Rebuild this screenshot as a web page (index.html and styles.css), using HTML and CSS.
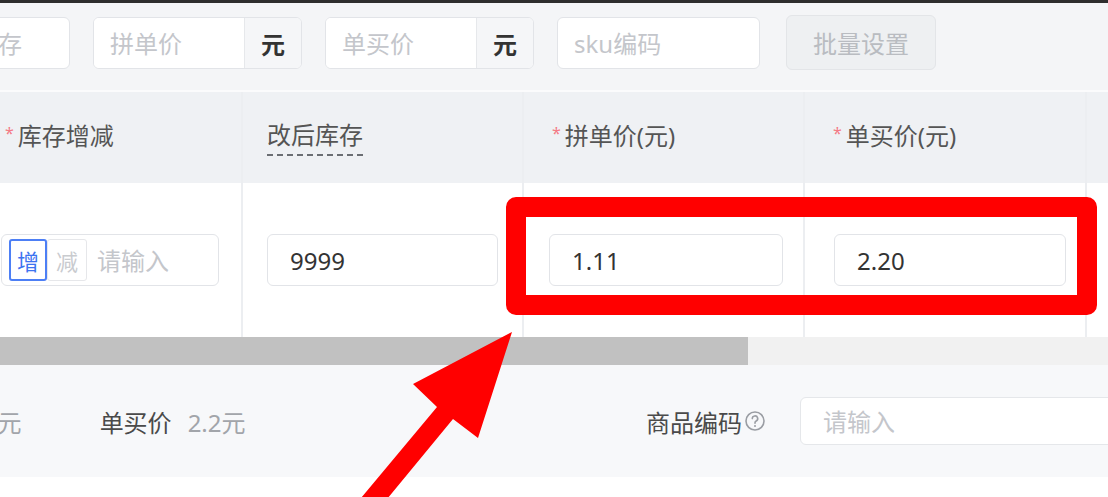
FILE: index.html
```html
<!DOCTYPE html>
<html lang="zh-CN">
<head>
<meta charset="utf-8">
<title>SKU 批量设置</title>
<link rel="stylesheet" href="styles.css">
</head>
<body>
<div class="page">
  <div class="topbar"></div>
  <div class="toolbar">
    <input class="input stock" placeholder="库存">
    <div class="group">
      <input class="input" placeholder="拼单价">
      <div class="addon">元</div>
    </div>
    <div class="group">
      <input class="input" placeholder="单买价">
      <div class="addon">元</div>
    </div>
    <input class="input sku" placeholder="sku编码">
    <button class="btn" disabled>批量设置</button>
  </div>

  <div class="table">
    <div class="row head">
      <div class="cell c1 req-cell"><span class="req">*</span>库存增减</div>
      <div class="cell c2"><span class="tip">改后库存</span></div>
      <div class="cell c3 req-cell"><span class="req">*</span>拼单价(元)</div>
      <div class="cell c4 req-cell"><span class="req">*</span>单买价(元)</div>
      <div class="cell c5"></div>
    </div>
    <div class="row body">
      <div class="cell c1">
        <div class="stepper">
          <span class="seg on">增</span>
          <span class="seg">减</span>
          <input class="step-input" placeholder="请输入">
        </div>
      </div>
      <div class="cell c2"><input class="input cell-input" value="9999"></div>
      <div class="cell c3 pad3"><input class="input cell-input" value="1.11"></div>
      <div class="cell c4 pad4"><input class="input cell-input" value="2.20"></div>
      <div class="cell c5"></div>
    </div>
  </div>

  <div class="scroll"><div class="thumb"></div></div>

  <div class="footer">
    <div class="fgroup first">
      <span class="flabel">拼单价</span><span class="fval">1.11元</span>
    </div>
    <div class="fgroup second">
      <span class="flabel">单买价</span><span class="fval">2.2元</span>
    </div>
    <div class="fright">
      <span class="flabel">商品编码</span>
      <svg class="qicon" viewBox="0 0 22 22" width="22" height="22" aria-hidden="true">
        <circle cx="11" cy="11" r="9" fill="none" stroke="#9a9da3" stroke-width="1.6"/>
        <path d="M8.3 8.6a2.7 2.7 0 1 1 3.9 2.4c-.8.4-1.2.9-1.2 1.7v.6" fill="none" stroke="#9a9da3" stroke-width="1.6" stroke-linecap="round"/>
        <circle cx="11" cy="15.9" r="1" fill="#9a9da3"/>
      </svg>
      <input class="input code" placeholder="请输入">
    </div>
  </div>
</div>

<div class="mark"></div>
<svg class="arrow" viewBox="0 0 1108 497" width="1108" height="497" aria-hidden="true">
  <polygon points="512,332 413,384 437,407 351,510 378,510 453,419 478,438" fill="#ff0000"/>
</svg>
</body>
</html>
```

FILE: styles.css
```css
html, body {
  margin: 0;
  padding: 0;
  overflow: hidden;
}

body {
  width: 1108px;
  height: 497px;
  background: #ffffff;
  font-family: "Noto Sans", "Noto Sans CJK SC", sans-serif;
  font-size: 24px;
  color: #333333;
  position: relative;
}

.page {
  width: 1108px;
  height: 497px;
  overflow: hidden;
}

.topbar {
  height: 3px;
  background: #2e2e2e;
}

/* toolbar */
.toolbar {
  height: 73px;
  padding-top: 14px;
  background: #f4f5f7;
  border-bottom: 2px solid #fbfbfc;
  display: flex;
  align-items: flex-start;
  gap: 23px;
}

.input {
  height: 52px;
  box-sizing: border-box;
  border: 1px solid #e2e4e8;
  border-radius: 6px;
  background: #ffffff;
  padding: 0 16px;
  font: inherit;
  color: #333333;
  outline: none;
  margin: 0;
}

.input::placeholder,
.step-input::placeholder {
  color: #c4c6cb;
}

.stock {
  width: 113px;
  margin-left: -43px;
  flex: 0 0 auto;
}

.group {
  display: flex;
  flex: 0 0 auto;
  width: 209px;
  height: 52px;
  box-sizing: border-box;
  border: 1px solid #e2e4e8;
  border-radius: 6px;
  overflow: hidden;
  background: #ffffff;
}

.group .input {
  border: none;
  border-radius: 0;
  flex: 1;
  min-width: 0;
  width: auto;
  height: 50px;
}

.addon {
  width: 56px;
  flex: 0 0 auto;
  border-left: 1px solid #e6e8eb;
  background: #f5f6f8;
  display: flex;
  align-items: center;
  justify-content: center;
  color: #333333;
  font-weight: 700;
}

.sku {
  width: 203px;
  flex: 0 0 auto;
}

.btn {
  flex: 0 0 auto;
  width: 150px;
  height: 55px;
  margin-top: -2px;
  margin-left: 3px;
  box-sizing: border-box;
  border: 1px solid #e3e5e8;
  border-radius: 6px;
  background: #eef0f2;
  color: #b9bcc1;
  font: inherit;
  padding: 0;
}

/* table */
.row {
  display: flex;
  margin-left: -23px;
}

.head {
  height: 91px;
  background: #eff1f4;
  color: #555555;
}

.head .cell {
  padding-bottom: 6px;
}

.body {
  height: 154px;
  background: #ffffff;
}

.cell {
  flex: 0 0 auto;
  box-sizing: border-box;
  border-right: 2px solid #eceef1;
  display: flex;
  align-items: center;
  padding: 0 24px;
}

.c1 { width: 266px; }
.c2 { width: 281px; }
.c3 { width: 281px; }
.c4 { width: 282px; }
.c5 { width: 220px; border-right: none; }

.head .req-cell {
  padding-left: 28px;
}

.req {
  color: #f47a86;
  font-size: 16px;
  margin-right: 4px;
  position: relative;
  top: -2px;
}

.tip {
  border-bottom: 2px dashed #6b6e73;
  line-height: 30px;
  padding-bottom: 4px;
  margin-top: 6px;
}

.pad3 { padding: 0 20px 0 25px; }
.pad4 { padding: 0 19px 0 29px; }

.cell-input {
  width: 100%;
  padding-left: 22px;
}

.stepper {
  width: 218px;
  height: 52px;
  box-sizing: border-box;
  border: 1px solid #e2e4e8;
  border-radius: 6px;
  display: flex;
  align-items: center;
  padding-left: 7px;
  background: #ffffff;
}

.seg {
  flex: 0 0 auto;
  width: 40px;
  height: 42px;
  box-sizing: border-box;
  border: 1px solid #e6e7ea;
  border-radius: 3px;
  display: flex;
  align-items: center;
  justify-content: center;
  font-size: 22px;
  color: #c9cbcf;
}

.seg.on {
  width: 38px;
  border: 2px solid #4d7ff5;
  color: #3d73f0;
}

.step-input {
  flex: 1;
  min-width: 0;
  border: none;
  outline: none;
  font: inherit;
  padding: 0 0 0 10px;
  background: transparent;
  color: #333333;
}

/* scrollbar */
.scroll {
  height: 28px;
  background: #f1f1f1;
}

.thumb {
  width: 748px;
  height: 100%;
  background: #c1c1c1;
}

/* footer */
.footer {
  height: 112px;
  background: #f7f8fa;
  display: flex;
  align-items: center;
}

.fgroup {
  display: flex;
  gap: 16px;
  flex: 0 0 auto;
}

.first { margin-left: -138px; }
.second { margin-left: 78px; }

.flabel {
  color: #4a4a4a;
}

.fval {
  color: #a2a5aa;
}

.fright {
  margin-left: auto;
  display: flex;
  align-items: center;
  flex: 0 0 auto;
}

.qicon {
  margin-left: 2px;
  flex: 0 0 auto;
}

.code {
  width: 330px;
  height: 48px;
  margin-left: 34px;
  margin-right: -22px;
  padding-left: 22px;
  border-color: #e5e7ea;
}

/* annotations */
.mark {
  position: absolute;
  left: 506px;
  top: 197px;
  width: 591px;
  height: 118px;
  box-sizing: border-box;
  border: 20px solid #ff0000;
  border-radius: 10px;
  pointer-events: none;
}

.arrow {
  position: absolute;
  left: 0;
  top: 0;
  pointer-events: none;
}
```
